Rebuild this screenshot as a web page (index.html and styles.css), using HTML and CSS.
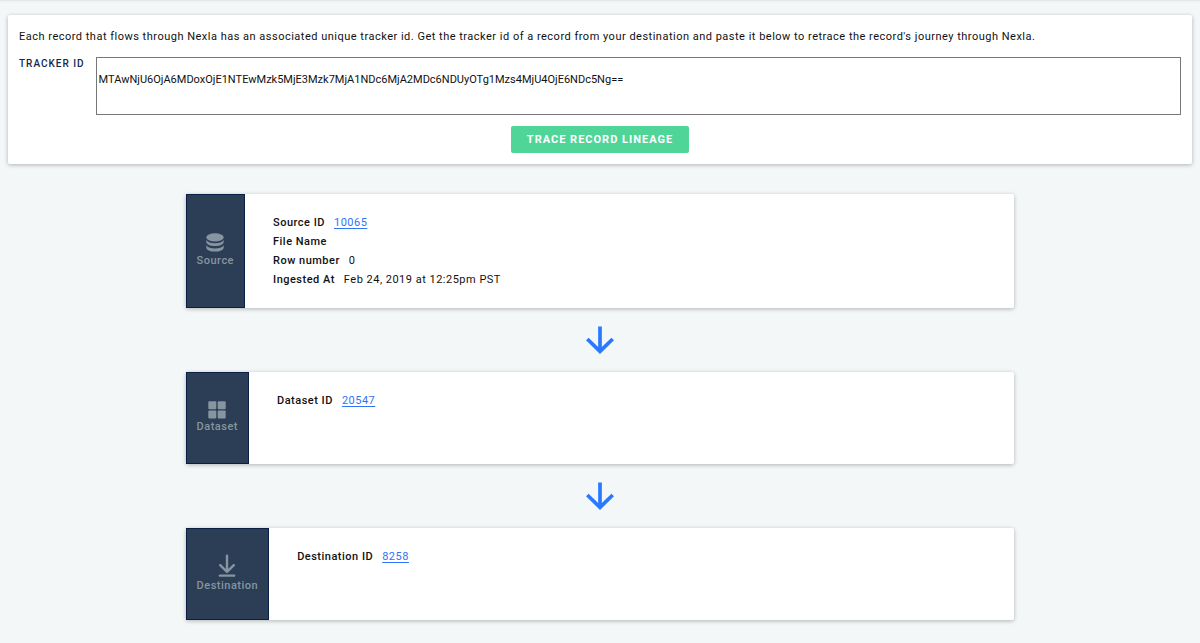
FILE: index.html
```html
<!DOCTYPE html>
<html lang="en">
<head>
<meta charset="utf-8">
<title>Record Lineage</title>
<link rel="stylesheet" href="styles.css">
</head>
<body>
<main class="page">
  <form class="card tracker">
    <p class="intro">Each record that flows through Nexla has an associated unique tracker id. Get the tracker id of a record from your destination and paste it below to retrace the record's journey through Nexla.</p>
    <div class="field">
      <label class="field-label" for="tracker-id">TRACKER ID</label>
      <textarea class="field-input" id="tracker-id" spellcheck="false">MTAwNjU6OjA6MDoxOjE1NTEwMzk5MjE3Mzk7MjA1NDc6MjA2MDc6NDUyOTg1Mzs4MjU4OjE6NDc5Ng==</textarea>
    </div>
    <button class="trace-button" type="button">TRACE RECORD LINEAGE</button>
  </form>

  <section class="lineage">
    <article class="card step step-source">
      <div class="step-type">
        <svg class="icon" width="18" height="20" viewBox="0 0 18 20" fill="currentColor" aria-hidden="true">
          <ellipse cx="9" cy="4.4" rx="8.700" ry="4.1"/>
          <path d="M.3 7C1.700 9.200 5 10.200 9 10.200s7.300-1 8.700-3.200v1.900c0 2.300-3.900 4.100-8.700 4.100s-8.700-1.800-8.700-4.100z"/>
          <path d="M.3 12.200C1.700 14.400 5 15.400 9 15.400s7.300-1 8.700-3.200v2.200c0 2.400-3.900 4.200-8.700 4.200s-8.700-1.800-8.700-4.200z"/>
        </svg>
        <span>Source</span>
      </div>
      <dl class="details">
        <div class="row"><dt>Source ID</dt><dd><a href="#10065">10065</a></dd></div>
        <div class="row"><dt>File Name</dt><dd></dd></div>
        <div class="row"><dt>Row number</dt><dd>0</dd></div>
        <div class="row"><dt>Ingested At</dt><dd>Feb 24, 2019 at 12:25pm PST</dd></div>
      </dl>
    </article>

    <svg class="arrow" width="28" height="28" viewBox="0 0 28 28" fill="none" stroke="currentColor" stroke-width="3.700" aria-hidden="true">
      <path d="M14 .6v24M1.300 13 14 25.400 26.700 13"/>
    </svg>

    <article class="card step">
      <div class="step-type">
        <svg class="icon" width="18" height="18" viewBox="0 0 18 18" fill="currentColor" aria-hidden="true">
          <rect x=".3" y=".3" width="8" height="8" rx="1"/>
          <rect x="9.700" y=".3" width="8" height="8" rx="1"/>
          <rect x=".3" y="9.500" width="8" height="8" rx="1"/>
          <rect x="9.700" y="9.500" width="8" height="8" rx="1"/>
        </svg>
        <span>Dataset</span>
      </div>
      <dl class="details">
        <div class="row"><dt>Dataset ID</dt><dd><a href="#20547">20547</a></dd></div>
      </dl>
    </article>

    <svg class="arrow" width="28" height="28" viewBox="0 0 28 28" fill="none" stroke="currentColor" stroke-width="3.700" aria-hidden="true">
      <path d="M14 .6v24M1.300 13 14 25.400 26.700 13"/>
    </svg>

    <article class="card step">
      <div class="step-type">
        <svg class="icon" width="18" height="24" viewBox="0 0 18 24" fill="none" stroke="currentColor" stroke-width="2.400" stroke-linecap="round" stroke-linejoin="round" aria-hidden="true">
          <path d="M9 1.800v16M2.200 11.200 9 17.900l6.800-6.700M1.800 21.600h14.400"/>
        </svg>
        <span>Destination</span>
      </div>
      <dl class="details">
        <div class="row"><dt>Destination ID</dt><dd><a href="#8258">8258</a></dd></div>
      </dl>
    </article>
  </section>
</main>
</body>
</html>
```
FILE: styles.css
```css
* {
  box-sizing: border-box;
}

body {
  margin: 0;
  background: #f4f7f8;
  color: #111;
  font-family: Roboto, "Liberation Sans", sans-serif;
  font-size: 11px;
  line-height: 19px;
  letter-spacing: 0.045em;
}

.page {
  padding: 15px 8px 22px;
  box-shadow: inset 0 3px 2px -2px #dfe3e4;
}

.card {
  background: #fff;
  border-radius: 2px;
  box-shadow: 0 1px 4px rgba(0, 0, 0, 0.28);
}

.tracker {
  display: flex;
  flex-direction: column;
  padding: 12px 11px 11px;
}

.intro {
  margin: 0 0 11px;
}

.field {
  display: flex;
  align-items: flex-start;
  gap: 11px;
}

.field-label {
  line-height: 14px;
  font-size: 10px;
  font-weight: 500;
  letter-spacing: 1px;
  color: #14284c;
}

.field-input {
  flex: 1;
  height: 58px;
  padding: 12px 2px;
  border: 1px solid #777;
  border-radius: 0;
  background: #fff;
  color: #111;
  font: inherit;
  letter-spacing: normal;
  resize: none;
  outline: none;
}

.trace-button {
  align-self: center;
  margin-top: 11px;
  padding: 4px 16px;
  border: 0;
  border-radius: 2px;
  background: #50d598;
  color: #fff;
  font: inherit;
  font-weight: 700;
  letter-spacing: 1px;
}

.lineage {
  display: flex;
  flex-direction: column;
  align-items: center;
  gap: 18px;
  padding-top: 30px;
}

.step {
  display: flex;
  width: 70%;
  min-height: 92px;
}

.step-source {
  min-height: 114px;
}

.step-type {
  display: flex;
  flex-direction: column;
  align-items: center;
  justify-content: center;
  padding: 0 10px;
  border: 1px solid #0a1f44;
  background: #2b3e55;
  color: #8795a1;
  font-weight: 500;
  line-height: 16px;
}

.details {
  margin: 0;
  padding: 19px 28px;
}

.row {
  display: flex;
  gap: 9px;
}

.row dt {
  font-weight: 500;
}

.row dd {
  margin: 0;
}

.row a {
  color: #2f73f6;
  text-underline-offset: 2px;
}

.arrow {
  color: #2979ff;
}
```
